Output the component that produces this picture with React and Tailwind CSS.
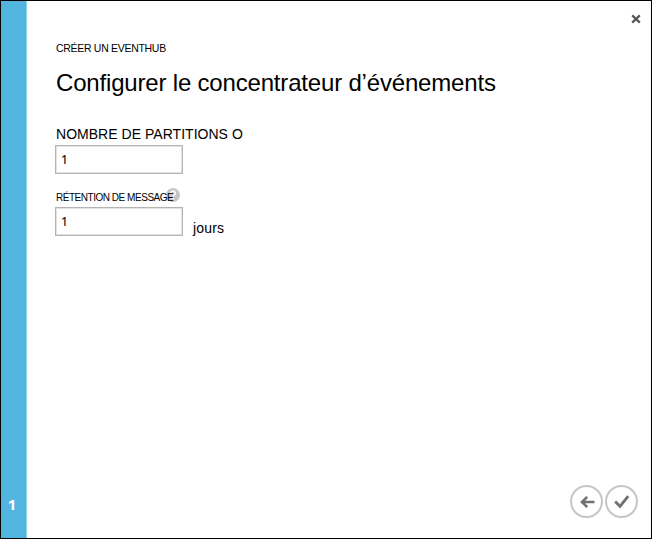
import React from "react";

function Field({ value }) {
  return (
    <input
      type="text"
      defaultValue={value}
      className="block h-[29px] w-[128px] border border-[#b4b4b4] bg-white pl-[5px] font-['Noto_Sans',sans-serif] text-[12px] font-medium text-[#222] shadow-[inset_0_0_0_1px_#e2e2e2] outline-none"
    />
  );
}

function RoundButton({ label, children }) {
  return (
    <button
      aria-label={label}
      className="flex size-[33px] items-center justify-center rounded-full border-2 border-[#c6c6c6] bg-white text-[#707070]"
    >
      {children}
    </button>
  );
}

export default function App() {
  return (
    <div className="flex h-[539px] w-[652px] overflow-hidden border border-black bg-white font-['Liberation_Sans',Arial,sans-serif] text-black">
      <aside className="flex w-[26px] shrink-0 flex-col justify-end border-r border-[#8fd0ea] bg-[#52b5e0] pb-[24px] pr-[3px] text-center font-['Noto_Sans',sans-serif] text-[15px] leading-[20px] font-bold text-white">
        1
      </aside>
      <main className="flex flex-1 flex-col">
        <header className="flex h-[40px] justify-end pt-[13px] pr-[10px]">
          <button aria-label="Fermer" className="size-[10px] text-[#555]">
            <svg viewBox="0 0 10 10" className="size-[10px]" fill="none" stroke="currentColor" strokeWidth="2.2">
              <path d="M1.2 1.4 8.8 8.6M8.8 1.4 1.2 8.6" />
            </svg>
          </button>
        </header>
        <section className="flex-1 pl-[28px]">
          <p className="ml-px h-[14px] text-[10.5px] leading-[14px] tracking-[-0.3px] whitespace-nowrap">
            CRÉER UN EVENTHUB
          </p>
          <h1 className="ml-px mt-[12px] h-[32px] text-[24px] leading-[32px] tracking-[-0.18px] whitespace-nowrap">
            Configurer le concentrateur d’événements
          </h1>
          <div className="mt-[25px]">
            <label className="ml-px block h-[21px] text-[14px] leading-[20px] tracking-[0.03px] whitespace-nowrap">
              NOMBRE DE PARTITIONS O
            </label>
            <Field value="1" />
          </div>
          <div className="mt-[13px]">
            <div className="relative h-[20px]">
              <svg
                viewBox="0 0 14 14"
                className="absolute top-px left-[111px] size-[14px]"
                fill="none"
                aria-hidden="true"
              >
                <circle cx="7" cy="7" r="7" fill="#c6c6c6" />
                <path d="M4.8 5.2a2.2 2.2 0 1 1 3.6 1.7C7.5 7.5 7 7.8 7 8.8M7 10v1.6" stroke="#fff" strokeWidth="1.6" />
              </svg>
              <label className="relative ml-px block text-[10px] leading-[22px] tracking-[-0.47px] whitespace-nowrap">
                RÉTENTION DE MESSAGE
              </label>
            </div>
            <div className="flex">
              <Field value="1" />
              <span className="mt-[11px] ml-[10px] h-[20px] text-[14px] leading-[20px] tracking-[0.15px]">jours</span>
            </div>
          </div>
        </section>
        <footer className="flex justify-end gap-[2px] pr-[13px] pb-[20px]">
          <RoundButton label="Précédent">
            <svg viewBox="0 0 16 14" className="h-[14px] w-[16px]" fill="none" stroke="currentColor" strokeWidth="2.6">
              <path d="M15.5 7H3M8.2 1.8 3 7l5.2 5.2" />
            </svg>
          </RoundButton>
          <RoundButton label="Terminer">
            <svg viewBox="0 0 16 14" className="h-[14px] w-[16px]" fill="none" stroke="currentColor" strokeWidth="2.8">
              <path d="M1.2 6.6 6 11.3 14.2 1.2" />
            </svg>
          </RoundButton>
        </footer>
      </main>
    </div>
  );
}
